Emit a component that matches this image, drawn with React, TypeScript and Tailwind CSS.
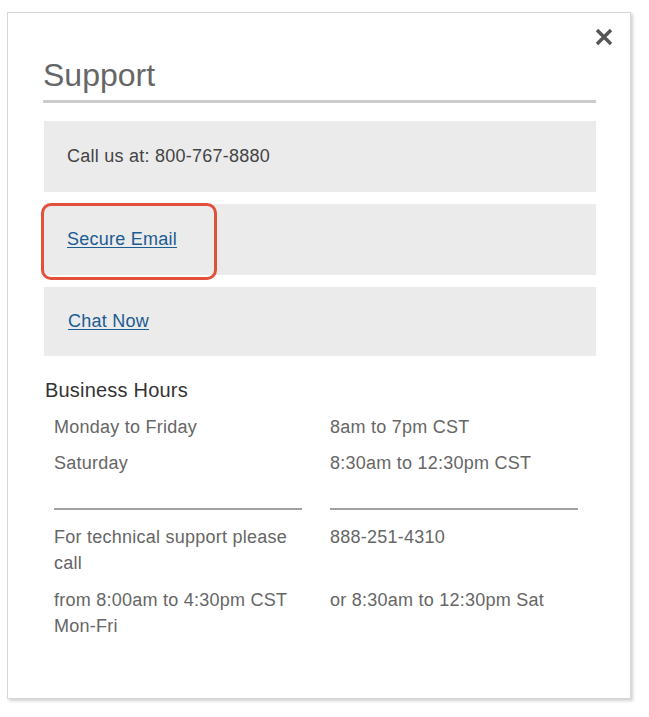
import React from 'react';

const rows = [
  { left: 'Monday to Friday', right: '8am to 7pm CST' },
  { left: 'Saturday', right: '8:30am to 12:30pm CST' },
];

export default function App() {
  return (
    <div className="min-h-[717px] w-[649px] bg-white pl-[7px] pt-[12px] font-['Liberation_Sans',Arial,sans-serif]">
      <div className="relative h-[687px] w-[624px] border border-[#d6d6d6] bg-white shadow-[2px_2px_3px_rgba(0,0,0,0.18)]">
        {/* Close */}
        <button className="absolute right-[15px] top-[13px] text-[#555]" aria-label="Close">
          <svg width="22" height="22" viewBox="0 0 22 22">
            <path d="M4 4 L18 18 M18 4 L4 18" stroke="currentColor" strokeWidth="3.4" strokeLinecap="butt" />
          </svg>
        </button>

        <div className="pl-[35px] pr-[34px] pt-[44px]">
          <h2 className="border-b-[3px] border-[#cccccc] pb-[7px] text-[32px] leading-[36px] text-[#666]">Support</h2>

          <div className="mt-[18px] flex flex-col gap-[12px] pl-[1px] tracking-[0.25px]">
            <div className="flex h-[71px] items-center bg-[#ebebeb] pl-[23px] text-[18px] text-[#444]">
              Call us at: 800-767-8880
            </div>
            <div className="relative flex h-[71px] items-center bg-[#ebebeb] pl-[23px] text-[18px]">
              <a href="#" className="text-[#1b5c93] underline underline-offset-2">Secure Email</a>
              {/* highlight annotation */}
              <div className="pointer-events-none absolute left-[-3px] top-[-1px] h-[77px] w-[176px] rounded-[10px] border-[3px] border-[#e2503c]" />
            </div>
            <div className="flex h-[69px] items-center bg-[#ebebeb] pl-[24px] text-[18px]">
              <a href="#" className="text-[#1b5c93] underline underline-offset-2">Chat Now</a>
            </div>
          </div>

          <h3 className="mt-[22px] pl-[2px] text-[20px] leading-[24px] text-[#333] tracking-[0.2px]">Business Hours</h3>

          <div className="mt-[7px] grid grid-cols-[248px_248px] gap-x-[28px] pl-[11px] text-[18px] leading-[26px] tracking-[0.25px] text-[#666]">
            {rows.map((r) => (
              <React.Fragment key={r.left}>
                <div className="py-[5px]">{r.left}</div>
                <div className="py-[5px]">{r.right}</div>
              </React.Fragment>
            ))}
            <div className="mt-[27px] border-b-2 border-[#a0a0a0]" />
            <div className="mt-[27px] border-b-2 border-[#a0a0a0]" />
            <div className="pt-[14px]">For technical support please call</div>
            <div className="pt-[14px]">888-251-4310</div>
            <div className="pt-[11px]">from 8:00am to 4:30pm CST Mon-Fri</div>
            <div className="pt-[11px]">or 8:30am to 12:30pm Sat</div>
          </div>
        </div>
      </div>
    </div>
  );
}
